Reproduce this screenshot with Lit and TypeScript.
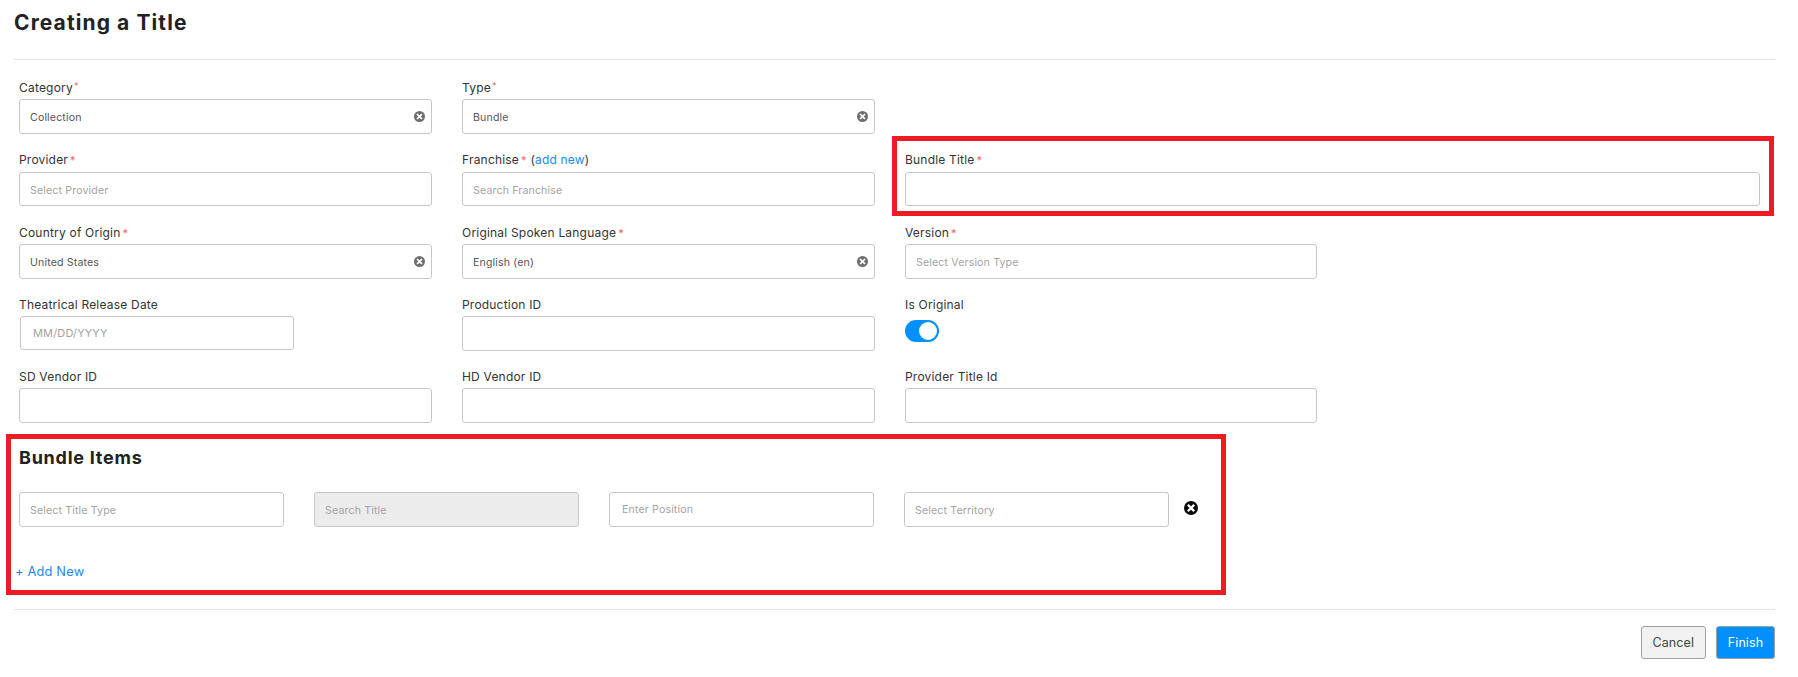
import { LitElement, html, css, svg, nothing } from "lit";
import { customElement } from "lit/decorators.js";

type Field = {
  label?: string;
  star?: "sup" | "mid";
  link?: boolean;
  value?: string;
  placeholder?: string;
  clear?: boolean;
  kind?: "date" | "toggle" | "blank" | "wide";
};

const FIELDS: Field[] = [
  { label: "Category", star: "sup", value: "Collection", clear: true },
  { label: "Type", star: "sup", value: "Bundle", clear: true },
  { kind: "blank" },
  { label: "Provider", star: "mid", placeholder: "Select Provider" },
  { label: "Franchise", star: "mid", link: true, placeholder: "Search Franchise" },
  { label: "Bundle Title", star: "mid", kind: "wide" },
  { label: "Country of Origin", star: "mid", value: "United States", clear: true },
  { label: "Original Spoken Language", star: "mid", value: "English (en)", clear: true },
  { label: "Version", star: "mid", placeholder: "Select Version Type" },
  { label: "Theatrical Release Date", placeholder: "MM/DD/YYYY", kind: "date" },
  { label: "Production ID" },
  { label: "Is Original", kind: "toggle" },
  { label: "SD Vendor ID" },
  { label: "HD Vendor ID" },
  { label: "Provider Title Id" },
];

const clearIcon = (cls: string) => html`<svg class=${cls} viewBox="0 0 14 14" aria-hidden="true">
  ${svg`<circle cx="7" cy="7" r="7" fill="currentColor"></circle>
  <path d="M4.6 4.6 L9.4 9.4 M9.4 4.6 L4.6 9.4" stroke="#fff" stroke-width="2.2" stroke-linecap="square"></path>`}
</svg>`;

@customElement("app-root")
export class AppRoot extends LitElement {
  static styles = css`
    :host {
      display: block;
      width: 1798px;
      height: 677px;
      background: #fff;
      overflow: hidden;
      font-family: Inter, "Open Sans", sans-serif;
      color: #333;
    }
    .page {
      display: flex;
      flex-direction: column;
      padding: 0 23px 0 14px;
      box-sizing: border-box;
    }
    h1 {
      margin: 0;
      height: 59px;
      padding-top: 10px;
      box-sizing: border-box;
      font-size: 21px;
      line-height: 26px;
      font-weight: 700;
      letter-spacing: 1.1px;
      color: #222;
    }
    .rule {
      height: 1px;
      background: #e3e3e3;
      flex: none;
    }
    .form {
      display: grid;
      grid-template-columns: 412.5px 412.5px 412px 1fr;
      column-gap: 30.5px;
      row-gap: 18.1px;
      margin: 19.5px 0 0 5px;
      width: 1741px;
    }
    .field {
      position: relative;
    }
    .field.col-0 {
      grid-column: 1;
    }
    .field.col-1 {
      grid-column: 2;
    }
    .field.col-2 {
      grid-column: 3;
    }
    .field.wide {
      grid-column: 3 / span 2;
    }
    .field.first {
      padding-bottom: 0.9px;
    }
    .field.first .label {
      margin-top: -1.5px;
      margin-bottom: 5px;
    }
    .label {
      height: 16px;
      margin-bottom: 3.5px;
      font-size: 12px;
      line-height: 16px;
      letter-spacing: 0.2px;
      color: #333;
      white-space: nowrap;
    }
    .star {
      color: #f0616d;
      margin-left: 2px;
      font-size: 11px;
    }
    .star.sup {
      font-size: 9px;
      vertical-align: 3px;
      margin-left: 1px;
    }
    .link {
      color: #1a88f0;
    }
    .input {
      position: relative;
      display: flex;
      align-items: center;
      height: 34.5px;
      box-sizing: border-box;
      padding: 2px 10px 0;
      background: #fff;
      border: 1px solid #c8c8c8;
      border-radius: 3px;
      font-size: 10.6px;
      letter-spacing: 0.15px;
      color: #555;
    }
    .input.placeholder {
      color: #a3a3a3;
    }
    .input.date {
      width: 274px;
      height: 33.5px;
      margin-left: 1px;
      padding-left: 12px;
      padding-top: 0;
      font-size: 11px;
    }
    .input.disabled {
      background: #ececec;
    }
    .input.position {
      padding-left: 12px;
      padding-top: 0;
    }
    .clear {
      position: absolute;
      right: 5.5px;
      top: 10.5px;
      width: 11px;
      height: 11px;
      color: #6e6e6e;
    }
    .toggle {
      position: relative;
      width: 34px;
      height: 22px;
      margin-top: 7.5px;
      border-radius: 11px;
      background: #0090ff;
    }
    .toggle::after {
      content: "";
      position: absolute;
      right: 2px;
      top: 2px;
      width: 18px;
      height: 18px;
      border-radius: 50%;
      background: #fff;
    }
    .callout {
      position: absolute;
      left: -13.5px;
      right: -14px;
      top: -16.5px;
      bottom: -10px;
      border: 5px solid #ed1c24;
      pointer-events: none;
    }
    .items {
      margin: 11.5px 0 0 -8px;
      width: 1220px;
      height: 161px;
      box-sizing: border-box;
      border: 5px solid #ed1c24;
      padding: 8px 0 0 8px;
    }
    h2 {
      margin: 0;
      height: 32px;
      font-size: 18px;
      line-height: 21px;
      font-weight: 700;
      letter-spacing: 0.75px;
      color: #222;
    }
    .item-row {
      display: grid;
      grid-template-columns: repeat(4, 264.5px) 14px;
      column-gap: 30.5px;
      margin-top: 13px;
      align-items: start;
    }
    .remove {
      width: 14px;
      height: 14px;
      margin: 9px 0 0 -15px;
      color: #0b0b0b;
    }
    .add {
      margin: 36px 0 0 -4px;
      font-size: 12.8px;
      line-height: 18px;
      letter-spacing: 0.2px;
      color: #1a88f0;
    }
    .page > .rule.bottom {
      margin-top: 14px;
    }
    .actions {
      display: flex;
      justify-content: flex-end;
      gap: 10.5px;
      margin-top: 16px;
    }
    .btn {
      display: flex;
      align-items: center;
      justify-content: center;
      height: 33px;
      box-sizing: border-box;
      border: 1px solid #a0a0a0;
      border-radius: 3px;
      font-size: 12.5px;
      letter-spacing: 0.1px;
    }
    .btn.cancel {
      width: 64.5px;
      background: #f2f2f2;
      color: #444;
    }
    .btn.finish {
      width: 59px;
      background: #0090ff;
      color: #fff;
    }
  `;

  private renderField(f: Field, i: number) {
    const col = `col-${i % 3}`;
    const first = i < 3 ? "first" : "";
    if (f.kind === "blank") return html`<div class="field ${col} ${first}"></div>`;
    const cls = `field ${first} ${f.kind === "wide" ? "wide" : col}`;
    return html`<div class=${cls}>
      <div class="label">
        ${f.label}${f.star ? html`<span class="star ${f.star}">*</span>` : nothing}${f.link
          ? html` <span>(<span class="link">add new</span>)</span>`
          : nothing}
      </div>
      ${f.kind === "toggle"
        ? html`<div class="toggle"></div>`
        : html`<div
            class="input ${f.kind === "date" ? "date" : ""} ${f.placeholder ? "placeholder" : ""}"
          >
            ${f.value ?? f.placeholder ?? ""} ${f.clear ? clearIcon("clear") : nothing}
          </div>`}
      ${f.kind === "wide" ? html`<div class="callout"></div>` : nothing}
    </div>`;
  }

  render() {
    return html`<div class="page">
      <h1>Creating a Title</h1>
      <div class="rule"></div>
      <div class="form">${FIELDS.map((f, i) => this.renderField(f, i))}</div>
      <section class="items">
        <h2>Bundle Items</h2>
        <div class="item-row">
          <div class="input placeholder">Select Title Type</div>
          <div class="input placeholder disabled">Search Title</div>
          <div class="input placeholder position">Enter Position</div>
          <div class="input placeholder">Select Territory</div>
          ${clearIcon("remove")}
        </div>
        <div class="add">+ Add New</div>
      </section>
      <div class="rule bottom"></div>
      <div class="actions">
        <div class="btn cancel">Cancel</div>
        <div class="btn finish">Finish</div>
      </div>
    </div>`;
  }
}
